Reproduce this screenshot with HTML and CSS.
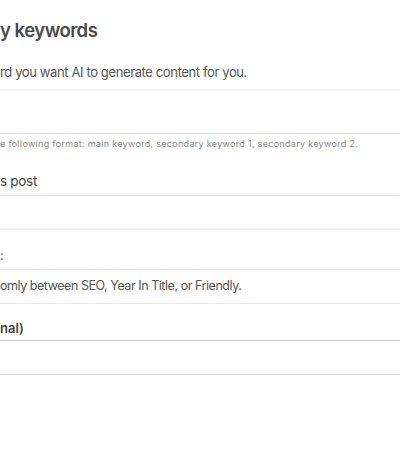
FILE: index.html
```html
<!DOCTYPE html>
<html lang="en">
<head>
<meta charset="utf-8">
<link rel="stylesheet" href="styles.css">
</head>
<body>
<div class="page">
  <h2 class="title">y keywords</h2>
  <p class="desc">rd you want AI to generate content for you.</p>
  <div class="input first"></div>
  <p class="hint">e following format: main keyword, secondary keyword 1, secondary keyword 2.</p>
  <div class="option">s post</div>
  <div class="menu">
    <div class="menu-row empty"></div>
    <div class="menu-row colon">:</div>
    <div class="menu-row text">omly between SEO, Year In Title, or Friendly.</div>
  </div>
  <div class="label">nal)</div>
  <div class="input last"></div>
</div>
</body>
</html>
```
FILE: styles.css
```css
html, body {
  margin: 0;
  padding: 0;
  background: #ffffff;
}
body {
  font-family: Inter, "Noto Sans", sans-serif;
  color: #4f4f4f;
  width: 400px;
  overflow: hidden;
}
.page {
  padding-top: 18px;
}
.title {
  margin: 0;
  font-size: 18.5px;
  font-weight: 600;
  line-height: 24px;
  letter-spacing: -0.5px;
  color: #4a4a4a;
}
.desc {
  margin: 0;
  padding-top: 22px;
  font-size: 13px;
  line-height: 16px;
  letter-spacing: -0.38px;
  color: #555555;
}
.input {
  box-sizing: border-box;
}
.input.first {
  margin-top: 9px;
  height: 45px;
  border-top: 2px solid #f0f0f0;
  border-bottom: 1px solid #e2e2e2;
}
.hint {
  margin: 0;
  padding-top: 4px;
  font-size: 9px;
  line-height: 12px;
  letter-spacing: 0.3px;
  color: #8a8a8a;
}
.option {
  padding-top: 22px;
  font-size: 13.5px;
  line-height: 18px;
  letter-spacing: -0.3px;
  color: #444444;
  height: 23px;
  border-bottom: 1px solid #e6e6e6;
  box-shadow: 0 1px 2px rgba(0,0,0,0.04);
}
.menu-row {
  box-sizing: border-box;
}
.menu-row.empty {
  height: 34px;
  border-bottom: 2px solid #eeeeee;
}
.menu-row.colon {
  height: 40px;
  padding-top: 16px;
  font-size: 13px;
  line-height: 18px;
  color: #555555;
  border-bottom: 1px solid #e6e6e6;
}
.menu-row.text {
  height: 34px;
  padding-top: 8px;
  font-size: 12.5px;
  line-height: 16px;
  letter-spacing: -0.45px;
  color: #555555;
  border-bottom: 1px solid #e6e6e6;
}
.label {
  padding-top: 15px;
  height: 21px;
  font-size: 13px;
  line-height: 18px;
  font-weight: 600;
  color: #444444;
}
.input.last {
  height: 35px;
  border-top: 1px solid #c9c9c9;
  border-bottom: 1px solid #d2d2d2;
}
```
